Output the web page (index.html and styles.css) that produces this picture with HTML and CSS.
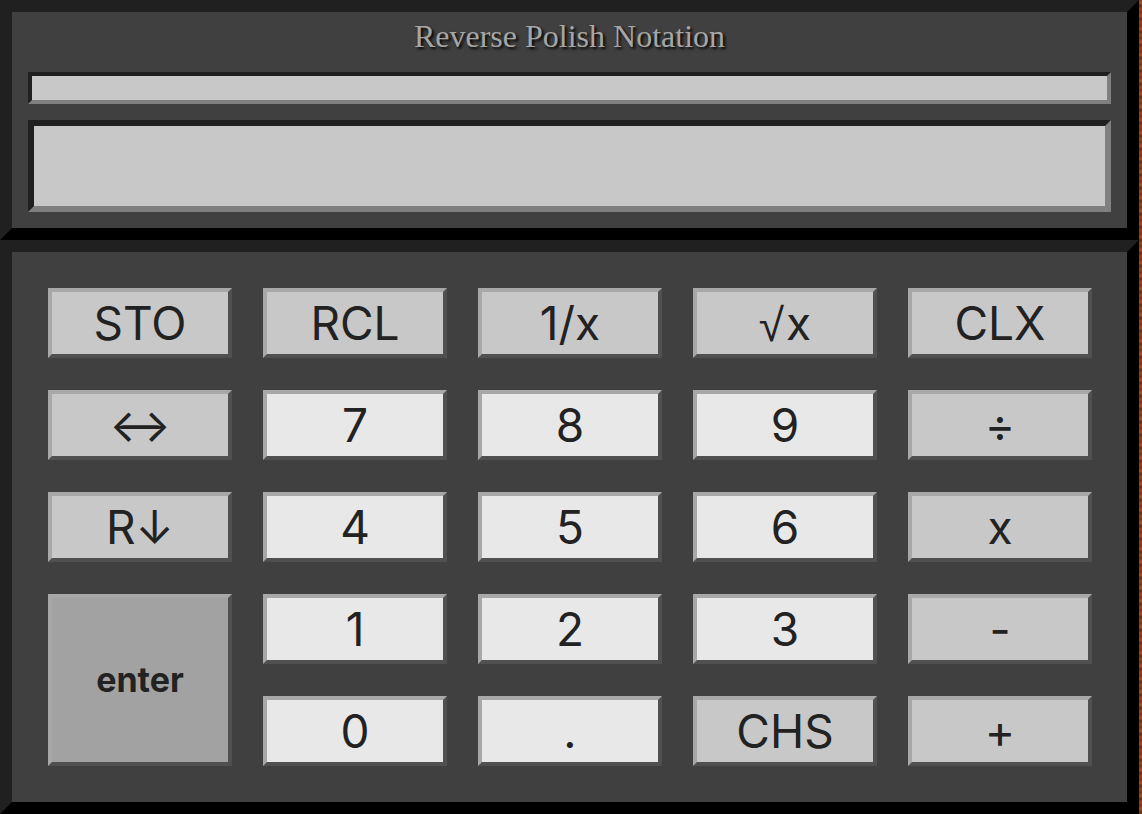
FILE: index.html
```html
<!DOCTYPE html>
<html lang="en">
<head>
<meta charset="utf-8">
<title>Reverse Polish Notation</title>
<link rel="stylesheet" href="styles.css">
</head>
<body>
<div class="calc">
  <section class="panel head">
    <div class="title">Reverse Polish Notation</div>
    <div class="display stack"></div>
    <div class="display main"></div>
  </section>
  <section class="panel keys">
    <div class="grid">
      <button class="key op">STO</button>
      <button class="key op">RCL</button>
      <button class="key op">1/x</button>
      <button class="key op"><span class="root">√</span>x</button>
      <button class="key op">CLX</button>

      <button class="key op">↔</button>
      <button class="key num">7</button>
      <button class="key num">8</button>
      <button class="key num">9</button>
      <button class="key op">÷</button>

      <button class="key op">R↓</button>
      <button class="key num">4</button>
      <button class="key num">5</button>
      <button class="key num">6</button>
      <button class="key op">x</button>

      <button class="key enter">enter</button>
      <button class="key num">1</button>
      <button class="key num">2</button>
      <button class="key num">3</button>
      <button class="key op">-</button>

      <button class="key num">0</button>
      <button class="key num">.</button>
      <button class="key op">CHS</button>
      <button class="key op">+</button>
    </div>
  </section>
</div>
</body>
</html>
```

FILE: styles.css
```css
*, *::before, *::after {
  box-sizing: border-box;
}

html, body {
  margin: 0;
  padding: 0;
}

body {
  height: 814px;
  overflow: hidden;
  background-color: #7a2e0c;
  background-image: repeating-linear-gradient(180deg, #8a3a12 0px, #a4501c 3px, #6e2808 6px, #9a4616 9px, #7c300e 13px);
}

.calc {
  width: 1139px;
  display: flex;
  flex-direction: column;
}

.panel {
  background: #404040;
  border-style: solid;
  border-width: 12px;
  border-color: #202020 #000000 #000000 #202020;
}

.head {
  height: 240px;
  padding: 0 16px 16px;
  display: flex;
  flex-direction: column;
}

.title {
  height: 60px;
  padding-top: 8px;
  font-family: "Liberation Serif", "Times New Roman", serif;
  font-size: 32px;
  line-height: 32px;
  text-align: center;
  color: #a6a6a6;
  text-shadow: 2px 2px 3px #000;
}

.display {
  background: #c8c8c8;
  border-style: solid;
  border-color: #202020 #808080 #808080 #202020;
}

.stack {
  height: 32px;
  border-width: 4px;
  margin-bottom: 16px;
}

.main {
  height: 92px;
  border-width: 6px;
}

.keys {
  height: 574px;
  padding: 36px;
}

.grid {
  display: grid;
  grid-template-columns: repeat(5, 184px);
  grid-template-rows: repeat(5, 70px);
  column-gap: 31px;
  row-gap: 32px;
}

.key {
  margin: 0;
  padding: 0;
  display: flex;
  align-items: center;
  justify-content: center;
  border-style: solid;
  border-width: 4px;
  border-color: #a8a8a8 #505050 #505050 #a8a8a8;
  font-family: Inter, "Noto Sans", sans-serif;
  font-size: 46px;
  font-weight: 400;
  color: #222222;
  line-height: 1;
}

.root {
  font-family: "Noto Sans", sans-serif;
  font-weight: 300;
  margin-right: 2px;
}

.op {
  background: #c8c8c8;
}

.num {
  background: #e8e8e8;
}

.enter {
  grid-row: span 2;
  background: #a2a2a2;
  font-size: 34px;
  font-weight: 700;
}
```
